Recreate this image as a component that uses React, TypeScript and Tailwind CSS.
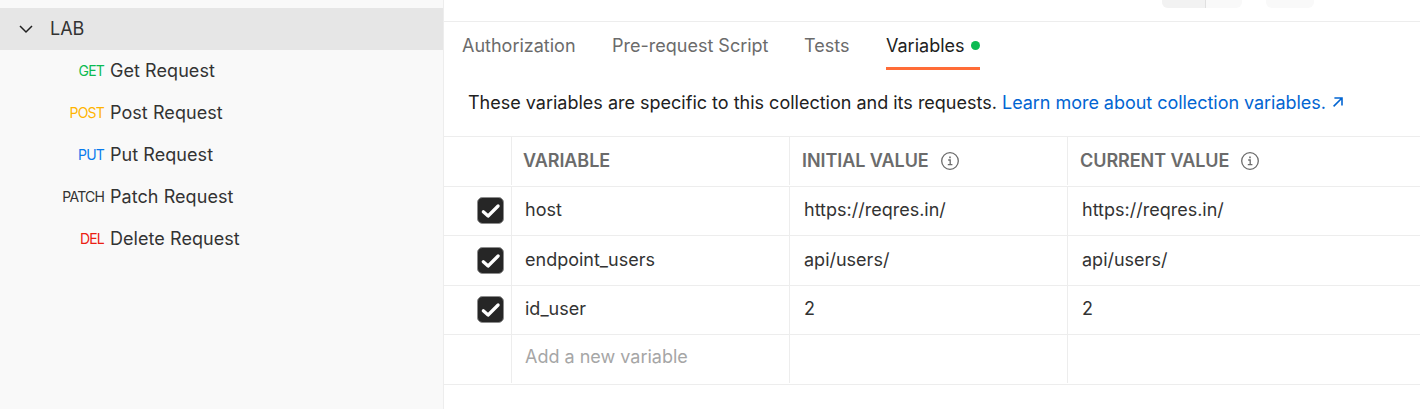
const requests = [
  { method: 'GET', name: 'Get Request', color: 'text-[#0cbb52]' },
  { method: 'POST', name: 'Post Request', color: 'text-[#ffb400]' },
  { method: 'PUT', name: 'Put Request', color: 'text-[#097bed]' },
  { method: 'PATCH', name: 'Patch Request', color: 'text-[#333333]' },
  { method: 'DEL', name: 'Delete Request', color: 'text-[#eb2013]' },
];

const variables = [
  { key: 'host', value: 'https://reqres.in/', height: 'h-[49px]' },
  { key: 'endpoint_users', value: 'api/users/', height: 'h-[50px]' },
  { key: 'id_user', value: '2', height: 'h-[49px]' },
];

function InfoIcon() {
  return (
    <svg width="18" height="18" viewBox="0 0 18 18" fill="none" stroke="#6b6b6b" strokeWidth="1.3">
      <circle cx="9" cy="9" r="8.3" />
      <path d="M7.2 8h2v4.6M6.8 12.6h4.6" />
      <path d="M8.2 4.6h1.6v1.6H8.2z" fill="#6b6b6b" stroke="none" />
    </svg>
  );
}

function Check() {
  return (
    <svg width="27" height="27" viewBox="0 0 27 27" fill="none">
      <rect x="0.5" y="0.5" width="26" height="26" rx="5" fill="#262626" stroke="#8c8c8c" />
      <path d="M6.3 14.7l4.8 4.3 10-10" stroke="#fff" strokeWidth="3.2" strokeLinecap="round" strokeLinejoin="round" />
    </svg>
  );
}

const grid = 'grid grid-cols-[67px_278px_278px_1fr] border-b border-[#ededed]';
const cell = 'flex items-center border-l border-[#ededed] pb-[3px]';
const heading = 'flex items-center border-l border-[#ededed] pb-px mb-px tracking-[-0.06px]';

export default function App() {
  return (
    <div className="flex h-[409px] w-[1420px] overflow-hidden bg-white font-['Inter',sans-serif] text-[18px] text-[#212121]">
      <aside className="w-[444px] shrink-0 border-r border-[#ededed] bg-[#f9f9f9] text-[#333333]">
        <div className="mt-2 flex h-[42px] items-center bg-[#e6e6e6] pl-[19px]">
          <svg width="14" height="10" viewBox="0 0 14 10" fill="none" stroke="#212121" strokeWidth="1.5"><path d="M1 2l6 6 6-6" /></svg>
          <span className="ml-[17px] pb-0.5">LAB</span>
        </div>
        {requests.map((r) => (
          <div key={r.method} className="flex h-[42px] items-center pb-0.5">
            <span className={`w-[104px] text-right text-[14px] tracking-[-0.8px] ${r.color}`}>{r.method}</span>
            <span className="ml-1.5 tracking-[0.06px]">{r.name}</span>
          </div>
        ))}
      </aside>
      <main className="min-w-0 grow">
        <div className="flex h-[22px] border-b border-[#ededed] pl-[718px]">
          <div className="flex h-2 w-[80px] overflow-hidden rounded-b-[6px] bg-[#f9f9f9]">
            <div className="w-11 border-r border-[#e0e0e0] bg-[#f2f2f2]" />
          </div>
          <div className="ml-6 h-2 w-[48px] rounded-b-[6px] bg-[#f9f9f9]" />
        </div>
        <nav className="flex h-12 gap-9 pl-[18px] text-[#6b6b6b]">
          <span className="w-[114px] whitespace-nowrap pt-2.5">Authorization</span>
          <span className="w-[156px] whitespace-nowrap pt-2.5">Pre-request Script</span>
          <span className="w-[46px] whitespace-nowrap pt-2.5">Tests</span>
          <span className="flex w-[94px] items-start justify-between border-b-[3px] border-[#ff6c37] pt-2.5 text-[#212121]">
            Variables<i className="mt-[9px] size-[9px] rounded-full bg-[#0cbb52]" />
          </span>
        </nav>
        <p className="flex h-[66px] items-center pb-0.5 pl-6">
          <span className="w-[534px] whitespace-nowrap">These variables are specific to this collection and its requests.</span>
          <span className="w-[323px] whitespace-nowrap tracking-[-0.04px] text-[#0265d2]">Learn more about collection variables.</span>
          <svg className="ml-2" width="10" height="10" viewBox="0 0 10 10" fill="none" stroke="#0265d2" strokeWidth="1.6"><path d="M.6 9.4l8.4-8.4M1.4 1H9v7.6" /></svg>
        </p>
        <div className={`${grid} h-[51px] border-t font-semibold text-[#6b6b6b]`}>
          <div />
          <div className={`${heading} pl-[11px]`}>VARIABLE</div>
          <div className={`${heading} pl-3`}>INITIAL VALUE<span className="ml-3"><InfoIcon /></span></div>
          <div className={`${heading} pl-3`}>CURRENT VALUE<span className="ml-3"><InfoIcon /></span></div>
        </div>
        {variables.map((v) => (
          <div key={v.key} className={`${grid} ${v.height} text-[#333333]`}>
            <div className="flex items-center pb-px pl-[33px]"><Check /></div>
            <div className={`${cell} pl-[13px]`}>{v.key}</div>
            <div className={`${cell} pl-3.5`}>{v.value}</div>
            <div className={`${cell} pl-3.5`}>{v.value}</div>
          </div>
        ))}
        <div className={`${grid} h-[50px]`}>
          <div />
          <div className="mb-px flex items-center border-l border-[#ededed] pb-[5px] pl-[13px] text-[#a6a6a6]">Add a new variable</div>
          <div className="mb-px border-l border-[#ededed]" />
          <div className="mb-px border-l border-[#ededed]" />
        </div>
      </main>
    </div>
  );
}
